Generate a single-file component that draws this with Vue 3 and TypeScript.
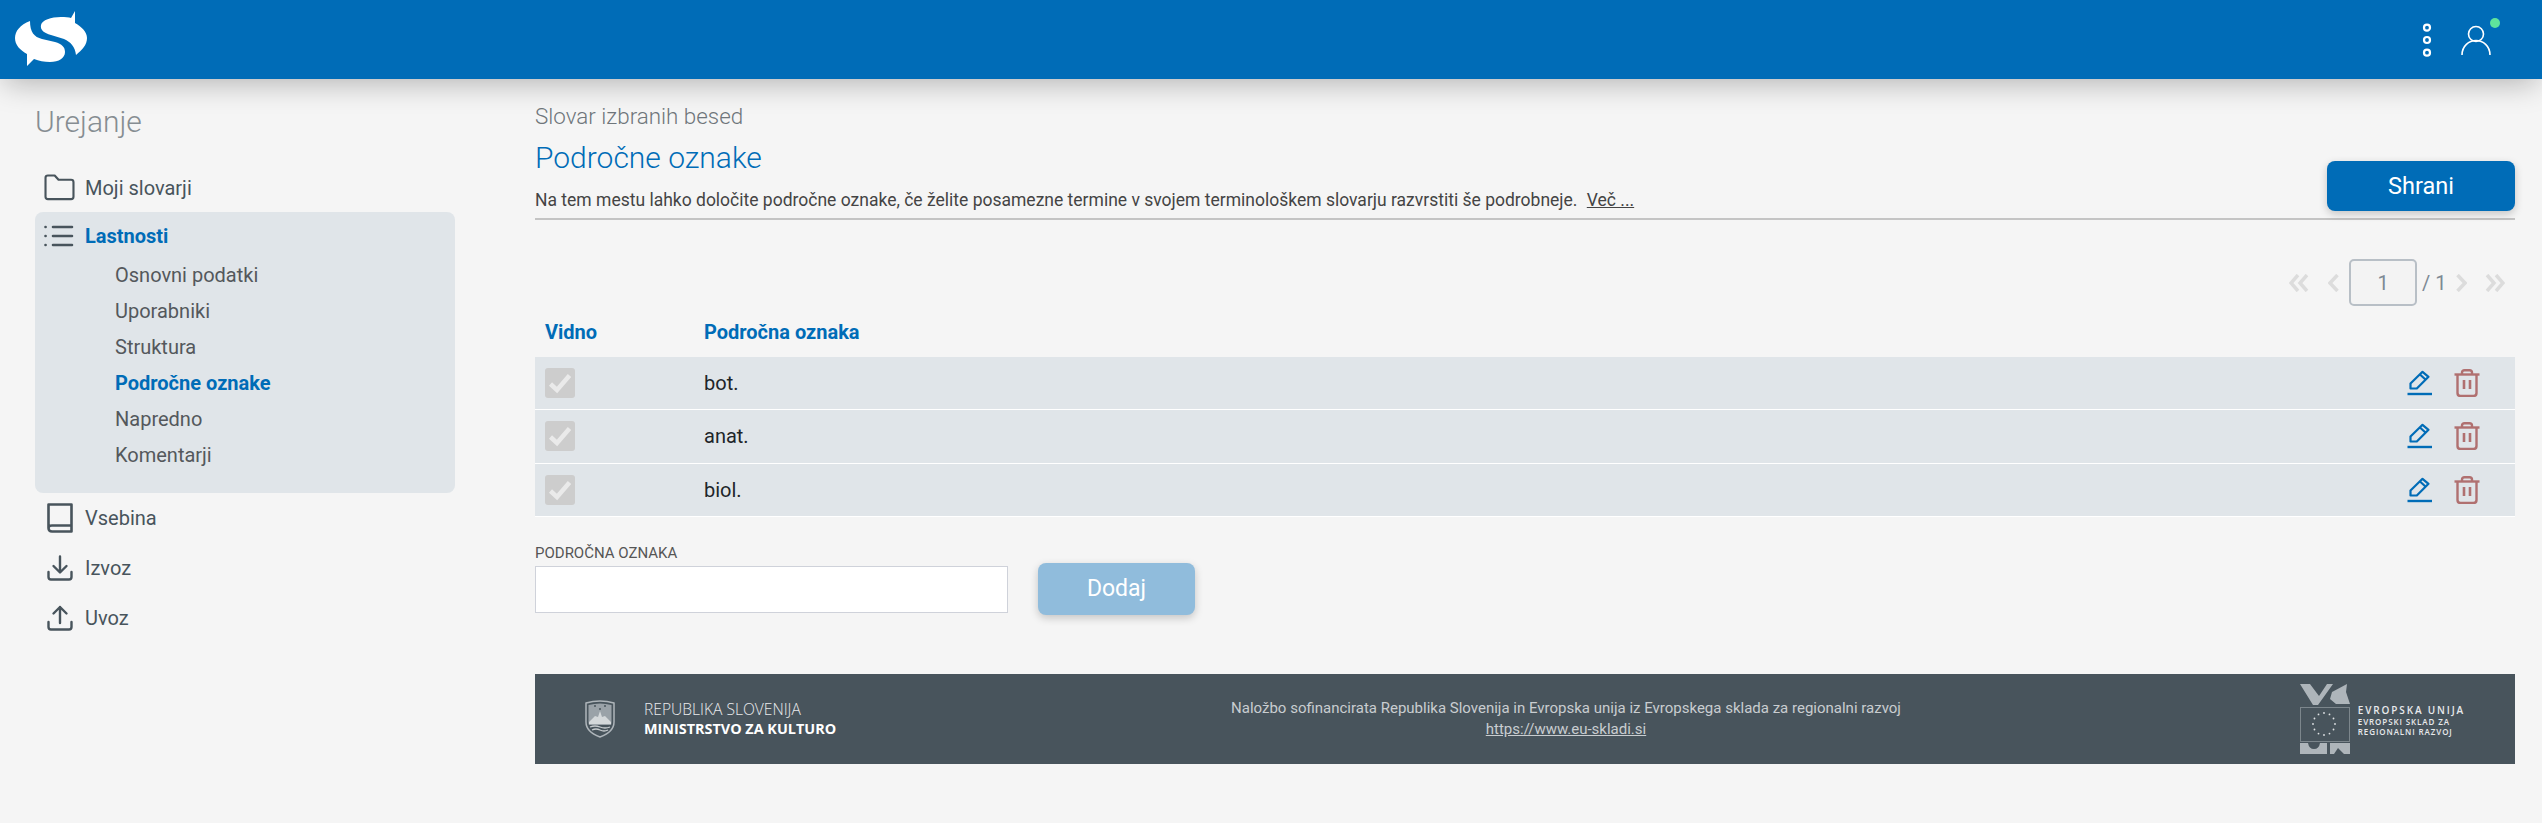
<script setup lang="ts">
const subItems = [
  { label: 'Osnovni podatki', active: false },
  { label: 'Uporabniki', active: false },
  { label: 'Struktura', active: false },
  { label: 'Področne oznake', active: true },
  { label: 'Napredno', active: false },
  { label: 'Komentarji', active: false },
]
const rows = ['bot.', 'anat.', 'biol.']
const stars = Array.from({ length: 12 }, (_, i) => {
  const a = (i * Math.PI) / 6
  return { x: 24 + 11 * Math.cos(a), y: 40 + 11 * Math.sin(a) }
})
</script>

<template>
  <div class="page">
    <header class="topbar">
      <svg class="logo" viewBox="0 0 72 56" width="72" height="56" fill="#fff">
        <path d="M15 10 C5 14 0 20 0 27 C0 34 5 39 12 43 L12 55 L19 48 C24 50 29 51 35 51 C44 51 50 47 50 41 C50 36 47 33 40 31 L27 28 C19 26 15 21 15 10 Z" />
        <path d="M26 14 C27 9 36 6 46 6 C50 6 54 6 56 7 L60 0 V12 C67 16 72 21 72 27 C72 34 67 39 61 44 C60 36 56 31 49 28 L36 24 C29 22 25 19 26 14 Z" />
      </svg>
      <div class="top-actions">
        <svg class="dots" viewBox="0 0 10 36" width="10" height="36" fill="none" stroke="#fff" stroke-width="2.2">
          <circle cx="5" cy="5.700" r="3" /><circle cx="5" cy="18" r="3" /><circle cx="5" cy="30.700" r="3" />
        </svg>
        <div class="user">
          <svg viewBox="0 0 32 32" width="32" height="32" fill="none" stroke="#fff" stroke-width="1.6">
            <circle cx="16" cy="9" r="7.500" />
            <path d="M2 30 C2 21 9 15.500 16 15.500 C23 15.500 30 21 30 30" />
          </svg>
          <span class="status"></span>
        </div>
      </div>
    </header>

    <div class="layout">
      <aside class="sidebar">
        <h2 class="side-title">Urejanje</h2>
        <nav>
          <div class="nav-item">
            <span class="nav-icon">
              <svg viewBox="0 0 32 28" width="31" height="27" fill="none" stroke="#48545c" stroke-width="2.200" stroke-linejoin="round">
                <path d="M1.500 4 Q1.500 1.500 4 1.500 H11 L15 6 H28 Q30.500 6 30.500 8.500 V23.500 Q30.500 26 28 26 H4 Q1.500 26 1.500 23.500 Z" />
              </svg>
            </span>
            <span>Moji slovarji</span>
          </div>
          <div class="panel">
            <div class="nav-item panel-head">
              <span class="nav-icon">
                <svg viewBox="0 0 30 22" width="30" height="22" fill="none" stroke="#48545c" stroke-width="2.600" stroke-linecap="round">
                  <path d="M9 2 H28 M9 11 H28 M9 20 H28" />
                  <path d="M1.500 2 H1.600 M1.500 11 H1.600 M1.500 20 H1.600" />
                </svg>
              </span>
              <span>Lastnosti</span>
            </div>
            <ul class="sub-list">
              <li v-for="item in subItems" :key="item.label" :class="{ active: item.active }">{{ item.label }}</li>
            </ul>
          </div>
          <div class="nav-item tall">
            <span class="nav-icon">
              <svg viewBox="0 0 26 30" width="26" height="30" fill="none" stroke="#48545c" stroke-width="2.600" stroke-linejoin="round">
                <path d="M1.500 25 V1.500 H24.500 V28.500 H5 Q1.500 28.500 1.500 25 Q1.500 22.500 5 22.500 H24.500" />
              </svg>
            </span>
            <span>Vsebina</span>
          </div>
          <div class="nav-item tall">
            <span class="nav-icon">
              <svg viewBox="0 0 26 26" width="26" height="26" fill="none" stroke="#48545c" stroke-width="2.400" stroke-linecap="round" stroke-linejoin="round">
                <path d="M13 1.500 V17 M6.500 11 L13 17.500 L19.500 11" />
                <path d="M1.500 17 V22 Q1.500 24.500 4 24.500 H22 Q24.500 24.500 24.500 22 V17" />
              </svg>
            </span>
            <span>Izvoz</span>
          </div>
          <div class="nav-item tall">
            <span class="nav-icon">
              <svg viewBox="0 0 26 26" width="26" height="26" fill="none" stroke="#48545c" stroke-width="2.400" stroke-linecap="round" stroke-linejoin="round">
                <path d="M13 18 V2 M6.500 8.500 L13 2 L19.500 8.500" />
                <path d="M1.500 17 V22 Q1.500 24.500 4 24.500 H22 Q24.500 24.500 24.500 22 V17" />
              </svg>
            </span>
            <span>Uvoz</span>
          </div>
        </nav>
      </aside>

      <main class="content">
        <div class="head">
          <div class="head-text">
            <div class="crumb">Slovar izbranih besed</div>
            <h1 class="title">Področne oznake</h1>
            <p class="desc">Na tem mestu lahko določite področne oznake, če želite posamezne termine v svojem terminološkem slovarju razvrstiti še podrobneje. <a class="more">Več ...</a></p>
          </div>
          <button class="btn save">Shrani</button>
        </div>

        <div class="pager">
          <svg viewBox="0 0 20 18" width="20" height="18" class="pg-a"><path d="M9 1 L2 9 L9 17 M18 1 L11 9 L18 17" /></svg>
          <svg viewBox="0 0 11 18" width="11" height="18" class="pg-b"><path d="M9.500 1 L2 9 L9.500 17" /></svg>
          <div class="pg-box">1</div>
          <span class="pg-total">/ 1</span>
          <svg viewBox="0 0 11 18" width="11" height="18" class="pg-c"><path d="M1.500 1 L9 9 L1.500 17" /></svg>
          <svg viewBox="0 0 20 18" width="20" height="18" class="pg-d"><path d="M2 1 L9 9 L2 17 M11 1 L18 9 L11 17" /></svg>
        </div>

        <div class="table">
          <div class="thead">
            <span class="col-a">Vidno</span>
            <span>Področna oznaka</span>
          </div>
          <div v-for="row in rows" :key="row" class="row">
            <span class="col-a">
              <span class="check">
                <svg viewBox="0 0 30 30" width="30" height="30" fill="none" stroke="#eaeaea" stroke-width="4.500"><path d="M5.500 16 L12 22 L24.500 7.500" /></svg>
              </span>
            </span>
            <span class="cell">{{ row }}</span>
            <svg class="edit" viewBox="0 0 26 26" width="26" height="26" fill="none" stroke="#006cb7" stroke-width="2.200" stroke-linejoin="round">
              <path d="M3.500 13.500 L15.500 1.800 L21.500 6.800 L9.800 18.500 H3.500 Z M13 4.500 L19 10" />
              <path d="M0.500 24 H25" stroke-width="2.400" />
            </svg>
            <svg class="trash" viewBox="0 0 26 28" width="26" height="28" fill="none" stroke="#b07070" stroke-width="2.400" stroke-linejoin="round">
              <path d="M0.500 5.500 H25.500" />
              <path d="M8 5 V3.500 Q8 1.200 10.500 1.200 H15.500 Q18 1.200 18 3.500 V5" />
              <path d="M3.500 5.500 V24 Q3.500 27 6.500 27 H19.500 Q22.500 27 22.500 24 V5.500" />
              <path d="M10 11 V20 M16 11 V20" stroke-width="2.600" />
            </svg>
          </div>
        </div>

        <div class="add">
          <label class="field">
            <span class="field-label">PODROČNA OZNAKA</span>
            <input class="input" type="text" />
          </label>
          <button class="btn add-btn">Dodaj</button>
        </div>

        <footer class="footer">
          <div class="foot-left">
            <svg viewBox="0 0 30 38" width="30" height="38">
              <path d="M1 3 Q15 -1 29 3 V22 Q29 32 15 37 Q1 32 1 22 Z" fill="none" stroke="#aeb5ba" stroke-width="1.500" />
              <path d="M3.500 5 Q15 2 26.500 5 V22 Q26.500 24 26 25 H4 Q3.500 24 3.500 22 Z" fill="#9aa2a8" />
              <path d="M4 22 L10 16 L13 17 L15 11 L17 17 L20 16 L26 22 V24 H4 Z" fill="#d4d8da" />
              <path d="M5 27 Q10 25 15 27 Q20 29 25 27 M7 30 Q11 28 15 30 Q19 32 23 30" fill="none" stroke="#c6cbce" stroke-width="1.300" />
              <circle cx="10" cy="6" r="1" fill="#48545c" /><circle cx="20" cy="6" r="1" fill="#48545c" /><circle cx="15" cy="9" r="1" fill="#48545c" />
            </svg>
            <div class="foot-brand">
              <div class="rs">REPUBLIKA SLOVENIJA</div>
              <div class="mk">MINISTRSTVO ZA KULTURO</div>
            </div>
          </div>
          <div class="foot-center">
            <div>Naložbo sofinancirata Republika Slovenija in Evropska unija iz Evropskega sklada za regionalni razvoj</div>
            <a class="foot-link">https://www.eu-skladi.si</a>
          </div>
          <div class="foot-right">
            <svg viewBox="0 0 50 70" width="50" height="70">
              <path d="M0 0 H10 L19 12 L27 0 H33 L18 21 H13 Z M32 8 L47 0 L46 8 L50 20 H36 L30 15 Z" fill="#aeb5ba" />
              <path d="M0 59 H8 Q9 65 14 65 Q19 65 20 59 H27 V70 H0 Z M30 59 H50 V70 H44 L38 64 L34 70 H30 Z" fill="#aeb5ba" />
              <rect x="0.500" y="23.500" width="49" height="34" fill="#48545c" stroke="#7c868c" stroke-width="1" />
              <circle v-for="(s, i) in stars" :key="i" :cx="s.x" :cy="s.y" r="0.900" fill="#dfe2e4" />
            </svg>
            <div class="eu-text">
              <div class="eu-a">EVROPSKA UNIJA</div>
              <div class="eu-b">EVROPSKI SKLAD ZA</div>
              <div class="eu-b">REGIONALNI RAZVOJ</div>
            </div>
          </div>
        </footer>
      </main>
    </div>
  </div>
</template>

<style>
html, body { margin: 0; background: #f5f5f5; }
</style>

<style scoped>
.page { min-height: 823px; background: #f5f5f5; font-family: Roboto, "Liberation Sans", sans-serif; color: #48545c; }
.topbar { position: relative; z-index: 2; height: 79px; background: #006cb7; display: flex; align-items: center; justify-content: space-between; padding: 0 24px 0 15px; box-shadow: 0 8px 30px -4px rgba(0,0,0,.28); box-sizing: border-box; }
.logo { display: block; margin-top: -1px; }
.top-actions { display: flex; align-items: center; gap: 28px; }
.dots { display: block; }
.user { position: relative; width: 32px; height: 32px; margin-right: 26px; margin-top: 3px; }
.user svg { display: block; }
.status { position: absolute; left: 30px; top: -7px; width: 10px; height: 10px; border-radius: 50%; background: #5fe39c; }

.layout { display: flex; align-items: flex-start; padding: 0 27px 0 35px; }
.sidebar { width: 420px; flex: none; margin-right: 80px; }
.side-title { margin: 25px 0 0; font-size: 30px; line-height: 36px; font-weight: 300; color: #868d92; }
nav { margin-top: 23px; }
.nav-item { display: flex; align-items: center; height: 49px; font-size: 20px; color: #48545c; }
.nav-item.tall { height: 50px; }
.nav-icon { width: 50px; padding-left: 9px; box-sizing: border-box; flex: none; display: flex; }
.nav-item.tall .nav-icon { padding-left: 12px; }
.panel { background: #e0e5e9; border-radius: 8px; height: 281px; box-sizing: border-box; padding-top: 3px; }
.panel-head { height: 42px; color: #006cb7; font-weight: 700; }
.sub-list { list-style: none; padding: 0 0 0 80px; margin: 0; font-size: 20px; }
.sub-list li { height: 36px; line-height: 36px; color: #54585c; }
.sub-list li.active { color: #006cb7; font-weight: 700; }

.content { flex: 1; min-width: 0; }
.head { display: flex; align-items: flex-end; justify-content: space-between; border-bottom: 2px solid #c4c4c4; height: 141px; box-sizing: border-box; }
.head-text { align-self: flex-start; }
.crumb { margin-top: 24px; font-size: 22.400px; line-height: 26px; font-weight: 300; color: #6f767b; }
.title { margin: 12px 0 0; font-size: 30px; line-height: 34px; font-weight: 300; color: #006cb7; }
.desc { margin: 14px 0 0; font-size: 17.500px; line-height: 22px; color: #444; white-space: nowrap; }
.more { margin-left: 5px; text-decoration: underline; }
.btn { border: 0; color: #fff; font-family: inherit; border-radius: 8px; box-shadow: 0 3px 8px rgba(0,0,0,.2); }
.save { width: 188px; height: 50px; margin-bottom: 7px; background: #006cb7; font-size: 23.500px; font-weight: 400; padding: 0; }

.pager { display: flex; align-items: center; justify-content: flex-end; margin-top: 39px; height: 47px; padding-right: 10px; }
.pager svg { fill: none; stroke: #dcdcdc; stroke-width: 3.500; flex: none; display: block; }
.pg-b { margin-left: 19px; margin-right: 10px; }
.pg-box { width: 68px; height: 47px; box-sizing: border-box; border: 2px solid #b8bfc6; border-radius: 5px; background: #f3f3f3; display: flex; align-items: center; justify-content: center; font-size: 20px; color: #7d8994; }
.pg-total { font-size: 20px; color: #7d8994; margin-left: 5px; width: 34px; }
.pg-d { margin-left: 18px; }

.table { margin-top: 1px; }
.thead { display: flex; align-items: center; height: 50px; font-size: 20px; font-weight: 700; color: #006cb7; }
.col-a { width: 169px; flex: none; padding-left: 10px; box-sizing: border-box; display: flex; }
.row { display: flex; align-items: center; height: 52.330px; margin-bottom: 1px; background: #e0e5e9; box-shadow: 0 1px 0 #fff; }
.check { width: 30px; height: 30px; border-radius: 3px; background: #cdcdcd; display: block; }
.check svg { display: block; }
.cell { flex: 1; font-size: 20px; color: #212529; }
.edit { display: block; margin-right: 21px; }
.trash { display: block; margin-right: 35px; }

.add { display: flex; align-items: flex-end; margin-top: 27px; }
.field { display: flex; flex-direction: column; width: 473px; margin-bottom: 2px; }
.field-label { font-size: 15px; line-height: 20px; color: #555; margin-bottom: 3px; }
.input { box-sizing: border-box; width: 473px; height: 47px; border: 1.500px solid #cfd2da; background: #fff; outline: none; padding: 0; }
.add-btn { width: 157px; height: 52px; margin-left: 30px; background: #90bcdc; font-size: 23px; font-weight: 400; padding: 0; }

.footer { display: grid; grid-template-columns: 400px 1fr 318px; align-items: center; height: 90px; margin-top: 59px; background: #48545c; }
.foot-left { display: flex; align-items: center; padding-left: 50px; gap: 29px; }
.foot-left svg { display: block; }
.foot-brand { font-family: "Open Sans", sans-serif; line-height: 20px; color: #e8eaec; }
.rs { font-weight: 300; font-size: 15.600px; }
.mk { font-weight: 700; font-size: 14.400px; color: #fff; }
.foot-center { text-align: center; font-size: 15px; line-height: 21px; color: #c9cdd0; }
.foot-link { text-decoration: underline; }
.foot-right { display: flex; align-items: center; justify-content: flex-end; padding-right: 50px; gap: 8px; }
.foot-right svg { display: block; }
.eu-text { font-family: "Open Sans", sans-serif; color: #e8eaec; margin-top: 4px; }
.eu-a { font-size: 10px; line-height: 13px; letter-spacing: 1.850px; font-weight: 600; }
.eu-b { font-size: 8px; line-height: 10px; letter-spacing: 0.900px; font-weight: 600; }
</style>
